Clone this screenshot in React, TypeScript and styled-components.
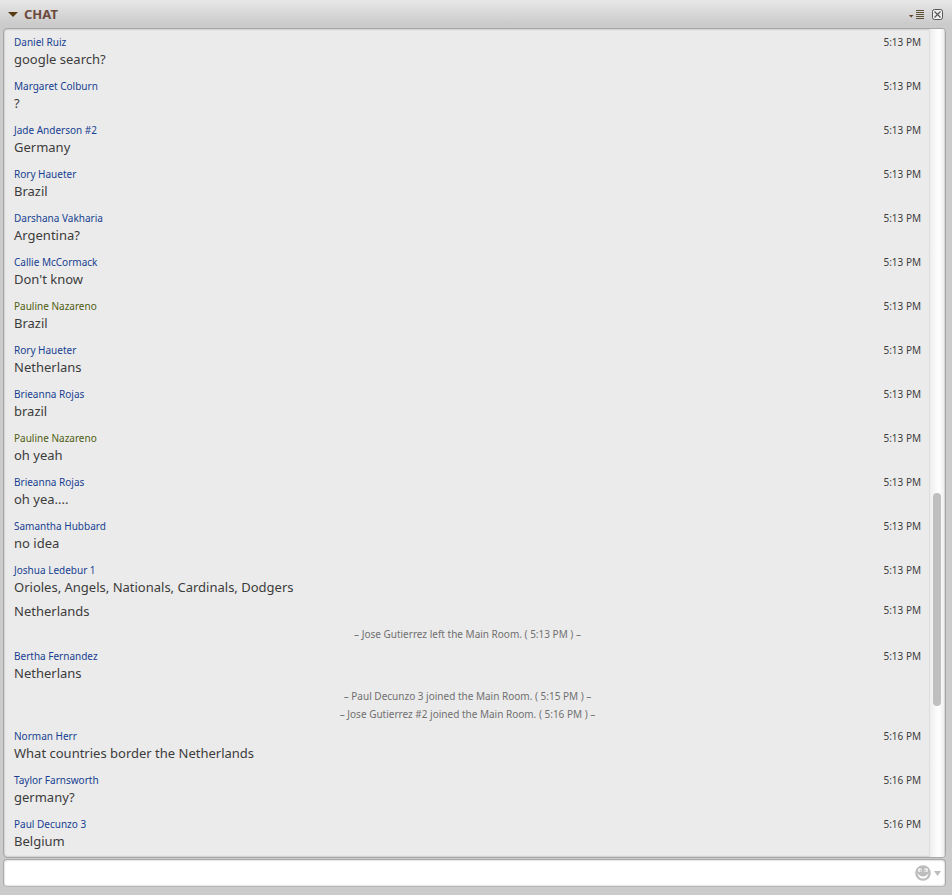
import React from "react";
import styled, { createGlobalStyle } from "styled-components";

const GlobalStyle = createGlobalStyle`
  * { box-sizing: border-box; }
  html, body { margin: 0; height: 100%; }
  body { background: #cbcbcb; font-family: "Noto Sans", sans-serif; color: #3c3c3c; }
  button { border: 0; padding: 0; background: none; font: inherit; color: inherit; }
  svg { display: block; }
`;

const Panel = styled.main`
  display: flex;
  flex-direction: column;
  height: 100vh;
  padding: 0 6px 8px 3px;
`;

const Header = styled.header`
  display: flex;
  align-items: center;
  justify-content: space-between;
  flex: none;
  height: 28px;
  margin: 0 -6px 0 -3px;
  padding: 0 9px 0 8px;
  background: linear-gradient(#e8e8e8, #dcdcdc 35%, #cbcbcb 85%);
`;

const Title = styled.h1`
  margin: 0;
  font-size: 13px;
  font-weight: 700;
  line-height: 28px;
  color: #6b4a3e;
`;

const TitleButton = styled.button`
  display: flex;
  align-items: center;
  gap: 6px;
`;

const Tools = styled.div`
  display: flex;
  align-items: center;
  gap: 8px;
`;

const LogFrame = styled.section`
  display: flex;
  flex: 1;
  min-height: 0;
  border: 1px solid #a6a6a6;
  border-radius: 4px;
  background: #ebebeb;
  box-shadow: inset 0 0 2px #999999;
  overflow: hidden;
`;

const Log = styled.div`
  flex: 1;
  min-width: 0;
  padding: 0 8px 0 10px;
  overflow: hidden;
`;

const Message = styled.article`
  padding: 5px 0;
`;

const Row = styled.div`
  display: flex;
  justify-content: space-between;
`;

const FollowUp = styled(Row)`
  margin-top: 6px;
`;

const Author = styled.span<{ $own?: boolean }>`
  font-size: 10px;
  line-height: 16px;
  color: ${({ $own }) => ($own ? "#4f5d12" : "#173f91")};
`;

const Time = styled.time`
  font-size: 10px;
  line-height: 16px;
  white-space: nowrap;
`;

const Body = styled.p`
  margin: 0;
  font-size: 13px;
  line-height: 18px;
`;

const Notice = styled.p`
  margin: 0;
  font-size: 10px;
  line-height: 18px;
  text-align: center;
  color: #707070;
`;

const Track = styled.div`
  display: flex;
  flex-direction: column;
  flex: none;
  width: 16px;
  padding: 0 4px 0 3px;
  border-left: 1px solid #dedede;
  background: linear-gradient(90deg, #eeeeee, #ffffff 60%, #f1f1f1 90%, #cccccc);
`;

const Space = styled.div<{ $share: number }>`
  flex: ${({ $share }) => $share} 1 0;
`;

const Thumb = styled(Space)`
  border-radius: 4px;
  background: #bfbfbf;
`;

const Composer = styled.form`
  display: flex;
  align-items: center;
  flex: none;
  height: 28px;
  margin-top: 1px;
  padding-right: 4px;
  border: 1px solid #a9a9a9;
  border-bottom-color: #b7b7b7;
  border-radius: 4px;
  background: #ffffff;
  box-shadow: inset 0 0 2px #aaaaaa;
`;

const Entry = styled.input`
  flex: 1;
  min-width: 0;
  height: 24px;
  padding: 0 10px;
  border: 0;
  outline: 0;
  background: transparent;
  font: inherit;
  font-size: 13px;
`;

const EmojiButton = styled.button`
  display: flex;
  align-items: center;
  gap: 3px;
`;

type Item =
  | { kind: "message"; author: string; own?: boolean; time: string; text: string; more?: string[] }
  | { kind: "notice"; text: string };

const say = (author: string, text: string, time = "5:13 PM", extra: { own?: boolean; more?: string[] } = {}): Item => ({
  kind: "message", author, text, time, ...extra,
});
const note = (text: string): Item => ({ kind: "notice", text });

const items: Item[] = [
  say("Daniel Ruiz", "google search?"),
  say("Margaret Colburn", "?"),
  say("Jade Anderson #2", "Germany"),
  say("Rory Haueter", "Brazil"),
  say("Darshana Vakharia", "Argentina?"),
  say("Callie McCormack", "Don't know"),
  say("Pauline Nazareno", "Brazil", "5:13 PM", { own: true }),
  say("Rory Haueter", "Netherlans"),
  say("Brieanna Rojas", "brazil"),
  say("Pauline Nazareno", "oh yeah", "5:13 PM", { own: true }),
  say("Brieanna Rojas", "oh yea...."),
  say("Samantha Hubbard", "no idea"),
  say("Joshua Ledebur 1", "Orioles, Angels, Nationals, Cardinals, Dodgers", "5:13 PM", { more: ["Netherlands"] }),
  note("– Jose Gutierrez left the Main Room. ( 5:13 PM ) –"),
  say("Bertha Fernandez", "Netherlans"),
  note("– Paul Decunzo 3 joined the Main Room. ( 5:15 PM ) –"),
  note("– Jose Gutierrez #2 joined the Main Room. ( 5:16 PM ) –"),
  say("Norman Herr", "What countries border the Netherlands", "5:16 PM"),
  say("Taylor Farnsworth", "germany?", "5:16 PM"),
  say("Paul Decunzo 3", "Belgium", "5:16 PM"),
];

const Disclosure = () => (
  <svg width="10" height="7" viewBox="0 0 10 7" aria-hidden="true">
    <path d="M0 1h10L5 6z" fill="#593b12" />
  </svg>
);

const MenuIcon = () => (
  <svg width="15" height="11" viewBox="0 0 15 11" aria-hidden="true">
    <path d="M0 6h4.500L2.200 8.500z" fill="#5d4524" />
    <path d="M7 1.500h8M7 3.500h8M7 5.500h8M7 7.500h8M7 9.500h8" stroke="#5d5037" strokeWidth="1" />
  </svg>
);

const CloseIcon = () => (
  <svg width="11" height="11" viewBox="0 0 11 11" aria-hidden="true">
    <rect x="0.5" y="0.5" width="10" height="10" rx="2" fill="#eeeeee" stroke="#555555" />
    <path d="M2.500 2.500l6 6M8.500 2.500l-6 6" stroke="#555555" strokeWidth="1.2" />
  </svg>
);

const Smiley = () => (
  <svg width="16" height="16" viewBox="0 0 16 16" aria-hidden="true">
    <circle cx="8" cy="8" r="7.8" fill="#bdbdbd" />
    <circle cx="5" cy="5.2" r="1.9" fill="#ffffff" />
    <circle cx="11" cy="5.2" r="1.9" fill="#ffffff" />
    <circle cx="5.500" cy="5.500" r="1.100" fill="#bdbdbd" />
    <circle cx="10.500" cy="5.500" r="1.100" fill="#bdbdbd" />
    <path d="M2.600 8c.3 3.600 2.500 5.600 5.400 5.600s5.100-2 5.400-5.600c-1 2.300-2.900 3.500-5.400 3.500s-4.400-1.200-5.400-3.500z" fill="#ffffff" />
  </svg>
);

const Caret = () => (
  <svg width="7" height="5" viewBox="0 0 7 5" aria-hidden="true">
    <path d="M0 0h7L3.500 5z" fill="#bdbdbd" />
  </svg>
);

export default function App() {
  return (
    <>
      <GlobalStyle />
      <Panel>
        <Header>
          <Title>
            <TitleButton type="button" aria-expanded="true"><Disclosure />CHAT</TitleButton>
          </Title>
          <Tools>
            <button type="button" aria-label="Chat options"><MenuIcon /></button>
            <button type="button" aria-label="Close chat"><CloseIcon /></button>
          </Tools>
        </Header>
        <LogFrame>
          <Log role="log" aria-label="Chat messages">
            {items.map((item, i) =>
              item.kind === "notice" ? (
                <Notice key={i}>{item.text}</Notice>
              ) : (
                <Message key={i}>
                  <Row>
                    <Author $own={item.own}>{item.author}</Author>
                    <Time>{item.time}</Time>
                  </Row>
                  <Body>{item.text}</Body>
                  {item.more?.map((text) => (
                    <FollowUp key={text}>
                      <Body>{text}</Body>
                      <Time>{item.time}</Time>
                    </FollowUp>
                  ))}
                </Message>
              )
            )}
          </Log>
          <Track aria-hidden="true">
            <Space $share={464} />
            <Thumb $share={213} />
            <Space $share={151} />
          </Track>
        </LogFrame>
        <Composer onSubmit={(e: React.FormEvent) => e.preventDefault()}>
          <Entry type="text" aria-label="Message" />
          <EmojiButton type="button" aria-label="Insert emoji"><Smiley /><Caret /></EmojiButton>
        </Composer>
      </Panel>
    </>
  );
}
